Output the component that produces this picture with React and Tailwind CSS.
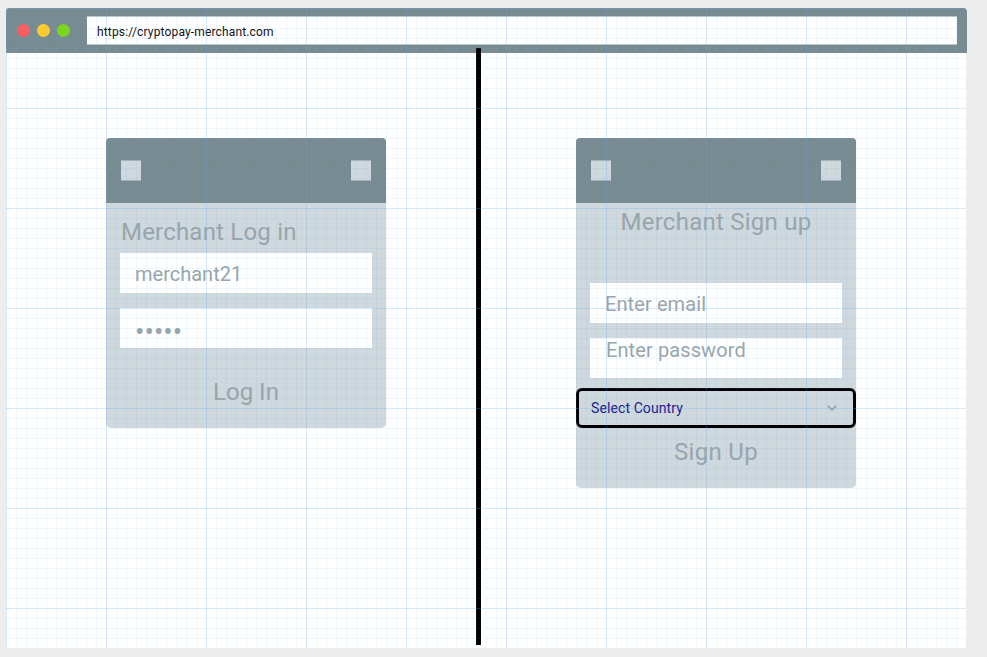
import React from "react";

function Square() {
  return <div className="h-[21px] w-5 border-y border-[#a4b1b6] bg-[#cfd8dd]" />;
}

function CardHeader() {
  return (
    <div className="flex h-[65px] items-center justify-between rounded-t-[4px] bg-[#788b90] px-[15px]">
      <Square />
      <Square />
    </div>
  );
}

function LoginCard() {
  return (
    <section className="flex h-[290px] w-[280px] flex-col rounded-[5px] bg-[#cfd8dd] text-[#9aa5a9]">
      <CardHeader />
      <h2 className="mt-[15px] h-[28px] pl-[15px] text-[24px] leading-[28px] tracking-[0.2px]">Merchant Log in</h2>
      <div className="mx-[14px] mt-[7px] h-10 bg-white pl-[15px] pt-px text-[20px] leading-[40px]">merchant21</div>
      <div className="mx-[14px] mt-[15px] h-10 bg-white pl-[15px] pt-[4px] text-[28px] leading-[40px]">•••••</div>
      <div className="mt-[30px] text-center text-[24px] leading-[28px]">Log In</div>
    </section>
  );
}

function SignupCard() {
  return (
    <section className="flex h-[350px] w-[280px] flex-col rounded-[5px] bg-[#cfd8dd] text-[#9aa5a9]">
      <CardHeader />
      <h2 className="mt-[5px] h-[28px] text-center text-[24px] leading-[28px] tracking-[0.25px]">Merchant Sign up</h2>
      <div className="mx-[14px] mt-[47px] h-10 bg-white pl-[15px] pt-px text-[20px] leading-[40px] tracking-[0.1px]">Enter email</div>
      <div className="mx-[14px] mt-[15px] h-10 bg-white pl-[16px] text-[20px] leading-[24px] tracking-[0.1px]">Enter password</div>
      <div className="mt-[10px] flex h-10 items-center justify-between rounded-[6px] border-[3px] border-black pl-3 pr-[16px] text-[14px] tracking-[0.1px] text-[#1a1a8c]">
        <span>Select Country</span>
        <svg className="h-[10px] w-[10px]" viewBox="0 0 10 10" fill="none" stroke="#8c979b" strokeWidth="1.5">
          <path d="M0.8 2.8L5 7L9.2 2.8" />
        </svg>
      </div>
      <div className="mt-[10px] text-center text-[24px] leading-[28px] tracking-[0.3px]">Sign Up</div>
    </section>
  );
}

export default function App() {
  return (
    <div className="h-[657px] w-[987px] overflow-hidden bg-[#ededed] pl-[6px] pt-2 font-['Roboto',sans-serif]">
      <div className="relative h-[640px] w-[961px]">
        <header className="flex h-[45px] items-center rounded-t-[4px] bg-[#788b90] pl-[11px] pr-[10px]">
          <div className="flex w-[70px] gap-[7px]">
            <span className="size-[13px] rounded-full bg-[#fb5c5c]" />
            <span className="size-[13px] rounded-full bg-[#ffcb2b]" />
            <span className="size-[13px] rounded-full bg-[#7bd61b]" />
          </div>
          <div className="flex h-[29px] flex-1 items-center border-y border-[#bcc5c8] bg-white pl-[10px] pt-[2px] text-[12px] tracking-[0.15px] text-[#111]">
            https://cryptopay-merchant.com
          </div>
        </header>
        <main className="flex h-[595px] w-[960px] bg-white">
          <div className="w-[470px] pl-[100px] pt-[85px]">
            <LoginCard />
          </div>
          <div className="relative -mt-[5px] h-[597px] w-[5px] bg-black" />
          <div className="pl-[95px] pt-[85px]">
            <SignupCard />
          </div>
        </main>
        <div className="pointer-events-none absolute left-0 top-0 h-[640px] w-[960px] bg-[linear-gradient(to_right,rgba(100,170,235,0.18)_1px,transparent_1px),linear-gradient(to_bottom,rgba(100,170,235,0.18)_1px,transparent_1px),linear-gradient(to_right,rgba(100,170,235,0.1)_1px,transparent_1px),linear-gradient(to_bottom,rgba(100,170,235,0.1)_1px,transparent_1px)] bg-[size:100px_100px,100px_100px,10px_10px,10px_10px]" />
      </div>
    </div>
  );
}
